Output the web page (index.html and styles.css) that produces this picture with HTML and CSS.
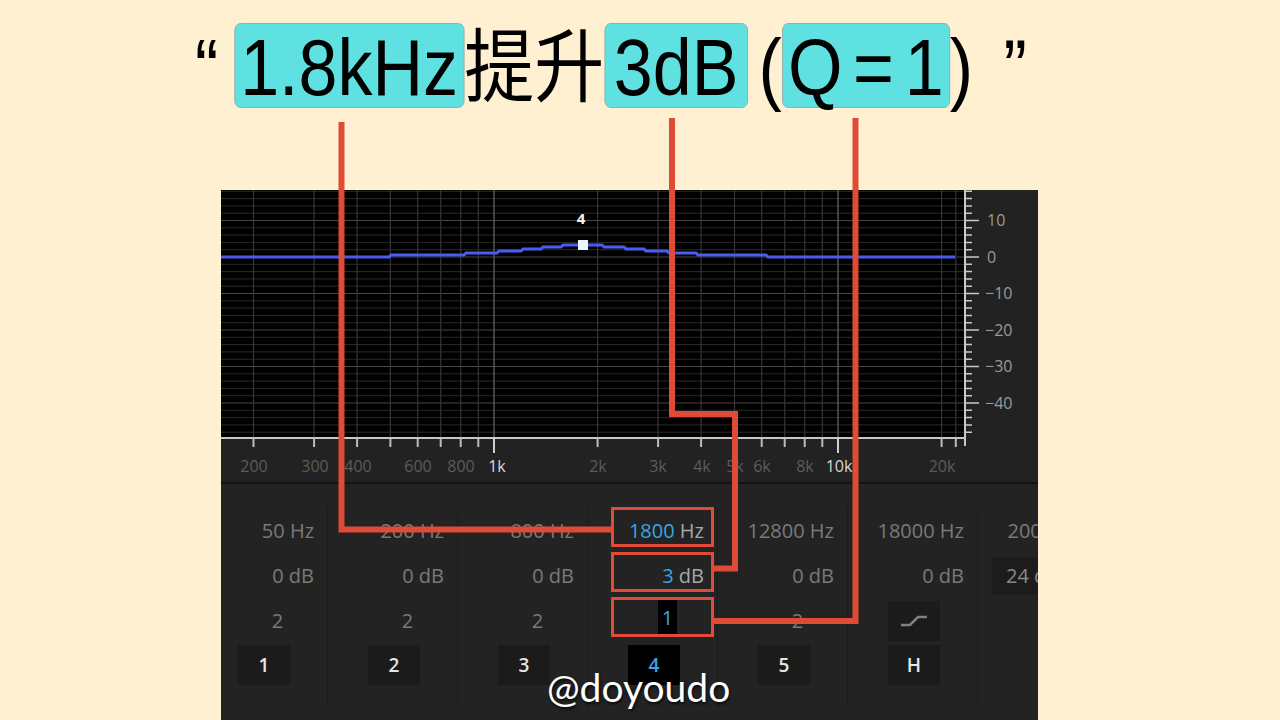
FILE: index.html
```html
<!DOCTYPE html>
<html lang="zh">
<head>
<meta charset="utf-8">
<title>Parametric EQ</title>
<link rel="stylesheet" href="styles.css">
</head>
<body>
<div class="slide">
  <div class="title">
    <span class="t q1">“</span>
    <span class="t hl">1.8kHz</span>
    <span class="t cjk">提升</span>
    <span class="t hl hl2">3dB</span>
    <span class="t paren">(</span>
    <span class="t hl hl3">Q = 1</span>
    <span class="t">)</span>
    <span class="t q2">”</span>
  </div>

  <div class="panel">
    <svg class="graph" width="817" height="295" viewBox="0 0 817 295">
      <rect x="0" y="0" width="817" height="295" fill="#222"/>
      <rect x="0" y="0" width="743" height="248" fill="#000"/>
      <path fill="none" stroke="#2a2a2a" stroke-width="1" d="M0 1.3H743M0 8.6H743M0 15.9H743M0 23.2H743M0 37.8H743M0 45.1H743M0 52.4H743M0 59.7H743M0 74.3H743M0 81.6H743M0 88.9H743M0 96.2H743M0 110.8H743M0 118.1H743M0 125.4H743M0 132.7H743M0 147.3H743M0 154.6H743M0 161.9H743M0 169.2H743M0 183.8H743M0 191.1H743M0 198.4H743M0 205.7H743M0 220.3H743M0 227.6H743M0 234.9H743M0 242.2H743"/>
      <path fill="none" stroke="#474747" stroke-width="1.2" d="M0 30.5H743M0 67H743M0 103.5H743M0 140H743M0 176.5H743M0 213H743"/>
      <path fill="none" stroke="#363636" stroke-width="1.2" d="M32.5 0V248M93.1 0V248M136.1 0V248M169.4 0V248M196.7 0V248M219.7 0V248M239.7 0V248M257.3 0V248M376.6 0V248M437.1 0V248M480.1 0V248M513.5 0V248M540.7 0V248M563.7 0V248M583.7 0V248M601.3 0V248M720.6 0V248M734.8 0V248"/>
      <path fill="none" stroke="#5a5a5a" stroke-width="1.4" d="M273 0V248M617 0V248"/>
      <path fill="none" stroke="#4a5cf0" stroke-width="3" d="M0 67H168L170 65H243L245 63H276L278 61H300L302 59H320L322 57H340L342 55H381L383 57H403L405 59H423L425 61H446L448 63H475L477 65H545L547 67H734"/>
      <rect x="357" y="50" width="10" height="10" fill="#eef4ff"/>
      <text x="360" y="34" class="node">4</text>
      <path fill="none" stroke="#c8c8c8" stroke-width="2" d="M0 248H745M744 0V256"/>
      <path fill="none" stroke="#bdbdbd" stroke-width="2" d="M32.5 248V257M93.1 248V257M136.1 248V257M169.4 248V257M196.7 248V257M219.7 248V257M239.7 248V257M257.3 248V257M376.6 248V257M437.1 248V257M480.1 248V257M513.5 248V257M540.7 248V257M563.7 248V257M583.7 248V257M601.3 248V257M720.6 248V257M734.8 248V257"/>
      <path fill="none" stroke="#d0d0d0" stroke-width="2" d="M273 248V263M617 248V263"/>
      <path fill="none" stroke="#c8c8c8" stroke-width="1.5" d="M744 1.3H751M744 8.6H751M744 15.9H751M744 23.2H751M744 37.8H751M744 45.1H751M744 52.4H751M744 59.7H751M744 74.3H751M744 81.6H751M744 88.9H751M744 96.2H751M744 110.8H751M744 118.1H751M744 125.4H751M744 132.7H751M744 147.3H751M744 154.6H751M744 161.9H751M744 169.2H751M744 183.8H751M744 191.1H751M744 198.4H751M744 205.7H751M744 220.3H751M744 227.6H751M744 234.9H751M744 242.2H751"/>
      <path fill="none" stroke="#c8c8c8" stroke-width="1.5" d="M744 30.5H758M744 67H758M744 103.5H758M744 140H758M744 176.5H758M744 213H758"/>
      <g class="flab">
        <text x="33" y="282">200</text>
        <text x="94" y="282">300</text>
        <text x="137" y="282">400</text>
        <text x="197" y="282">600</text>
        <text x="240" y="282">800</text>
        <text x="276" y="282" class="hi">1k</text>
        <text x="377" y="282">2k</text>
        <text x="437" y="282">3k</text>
        <text x="481" y="282">4k</text>
        <text x="514" y="282">5k</text>
        <text x="541" y="282">6k</text>
        <text x="584" y="282">8k</text>
        <text x="618" y="282" class="hi">10k</text>
        <text x="721" y="282">20k</text>
      </g>
      <g class="dlab">
        <text x="766" y="36.2">10</text>
        <text x="766" y="72.7">0</text>
        <text x="764" y="109.2">−10</text>
        <text x="764" y="145.7">−20</text>
        <text x="764" y="182.2">−30</text>
        <text x="764" y="218.7">−40</text>
      </g>
      <rect x="0" y="292" width="817" height="2" fill="#141414"/>
    </svg>

    <div class="bands">
      <div class="band">
        <div class="f">50 Hz</div>
        <div class="g">0 dB</div>
        <div class="q">2</div>
        <div class="b"><span class="btn">1</span></div>
      </div>
      <div class="band">
        <div class="f">200 Hz</div>
        <div class="g">0 dB</div>
        <div class="q">2</div>
        <div class="b"><span class="btn">2</span></div>
      </div>
      <div class="band">
        <div class="f">800 Hz</div>
        <div class="g">0 dB</div>
        <div class="q">2</div>
        <div class="b"><span class="btn">3</span></div>
      </div>
      <div class="band sel">
        <div class="f"><span class="on">1800</span> Hz</div>
        <div class="g"><span class="on">3</span> dB</div>
        <div class="q qs"><span class="qsel">1</span></div>
        <div class="b"><span class="btn act">4</span></div>
      </div>
      <div class="band">
        <div class="f">12800 Hz</div>
        <div class="g">0 dB</div>
        <div class="q">2</div>
        <div class="b"><span class="btn">5</span></div>
      </div>
      <div class="band">
        <div class="f">18000 Hz</div>
        <div class="g">0 dB</div>
        <div class="q qi"><span class="btn icon"><svg width="28" height="16" viewBox="0 0 28 16"><path d="M1 12H10L18 4H27" fill="none" stroke="#808080" stroke-width="2.5"/></svg></span></div>
        <div class="b"><span class="btn">H</span></div>
      </div>
      <div class="band">
        <div class="f">20000 Hz</div>
        <div class="g gd"><span class="dd">24 dB/Oct</span></div>
        <div class="q"></div>
        <div class="b"></div>
      </div>
    </div>
  </div>

  <svg class="annot" width="1280" height="720" viewBox="0 0 1280 720">
    <g fill="none" stroke="#e04b37" stroke-width="6">
      <path d="M341.5 122V529.5H611"/>
      <path d="M672 118V414H735V568.5H713"/>
      <path d="M855.5 118V621H713"/>
    </g>
    <g fill="none" stroke="#e04b37" stroke-width="3">
      <rect x="612.5" y="508.5" width="100" height="37"/>
      <rect x="612.5" y="553.5" width="100" height="37"/>
      <rect x="612.5" y="598.5" width="100" height="37"/>
    </g>
  </svg>

  <div class="mark">@doyoudo</div>
</div>
</body>
</html>
```

FILE: styles.css
```css
html, body {
  margin: 0;
  padding: 0;
}
body {
  width: 1280px;
  height: 720px;
  overflow: hidden;
  background: #fef0d1;
  font-family: "Open Sans", "Noto Sans", sans-serif;
}
.slide {
  position: relative;
  width: 1280px;
  height: 720px;
}

/* ---------- title ---------- */
.title {
  display: flex;
  align-items: baseline;
  height: 85px;
  margin-left: 195px;
  padding-top: 16px;
  transform: scaleX(0.875);
  transform-origin: 0 0;
  font-family: "Liberation Sans", "Noto Sans CJK SC", sans-serif;
  font-size: 80px;
  color: #000;
  white-space: nowrap;
}
.t {
  display: block;
  height: 85px;
  box-sizing: border-box;
  padding-top: 4px;
  line-height: 81px;
}
.hl {
  background: #5fe1e1;
  border: 1px solid #8eadad;
  border-radius: 7px;
  padding: 3px 6px 0;
}
.hl2 {
  padding-left: 10px;
  padding-right: 10px;
}
.hl3 {
  word-spacing: -10px;
}
.cjk {
  font-family: "Noto Sans CJK SC", sans-serif;
}
.q1 {
  margin-right: 18px;
}
.paren {
  margin-left: 12px;
}
.q2 {
  margin-left: 35px;
}

/* ---------- panel ---------- */
.panel {
  margin: 89px 0 0 221px;
  width: 817px;
  height: 530px;
  background: #232323;
  overflow: hidden;
}
.graph {
  display: block;
}
.node {
  font-family: "Open Sans", sans-serif;
  font-size: 15px;
  font-weight: 700;
  fill: #f4f4f4;
  text-anchor: middle;
}
.flab text {
  font-family: "Open Sans", sans-serif;
  font-size: 16px;
  fill: #5c5c5c;
  text-anchor: middle;
}
.flab text.hi {
  fill: #d8d8d8;
}
.dlab text {
  font-family: "Open Sans", sans-serif;
  font-size: 16px;
  fill: #9a9a9a;
}

.bands {
  display: flex;
  margin-left: -23px;
  padding-top: 23px;
}
.band {
  flex: none;
  width: 130px;
  box-sizing: border-box;
  border-right: 1px solid #1b1b1b;
  padding-bottom: 22px;
}
.f, .g {
  height: 45px;
  line-height: 45px;
  text-align: right;
  padding-right: 13px;
  font-size: 20px;
  color: #7a7a7a;
  white-space: nowrap;
}
.q {
  height: 45px;
  line-height: 45px;
  padding-left: 30px;
  text-align: center;
  font-size: 20px;
  color: #7a7a7a;
}
.b {
  margin-top: 2px;
  height: 40px;
  display: flex;
  justify-content: center;
  padding-left: 3px;
}
.btn {
  display: block;
  width: 52px;
  height: 40px;
  background: #1b1b1b;
  color: #e6e6e6;
  font-size: 19px;
  font-weight: 600;
  line-height: 40px;
  text-align: center;
}
.sel .f, .sel .g {
  color: #a8a8a8;
}
.on {
  color: #38a6e3;
}
.qs {
  display: flex;
  justify-content: center;
  align-items: center;
}
.qsel {
  display: block;
  background: #000;
  color: #38a6e3;
  padding: 0 4px;
  height: 35px;
  line-height: 35px;
  margin-top: -6px;
}
.btn.act {
  background: #000;
  color: #38a6e3;
}
.qi {
  display: flex;
  justify-content: center;
  align-items: center;
  padding-left: 3px;
}
.icon {
  display: flex;
  align-items: center;
  justify-content: center;
}
.gd {
  display: flex;
  align-items: center;
  padding-left: 14px;
  padding-right: 0;
  text-align: left;
}
.dd {
  display: block;
  background: #1c1c1c;
  height: 38px;
  line-height: 38px;
  padding: 0 14px;
  color: #8a8a8a;
  white-space: nowrap;
}

/* ---------- overlays ---------- */
.annot {
  position: absolute;
  left: 0;
  top: 0;
  pointer-events: none;
}
.mark {
  position: absolute;
  left: 547px;
  top: 668px;
  font-family: Lato, "Noto Sans", sans-serif;
  font-size: 39px;
  line-height: 39px;
  color: #fff;
  text-shadow: 1px 2px 3px rgba(0, 0, 0, 0.8);
}
```
